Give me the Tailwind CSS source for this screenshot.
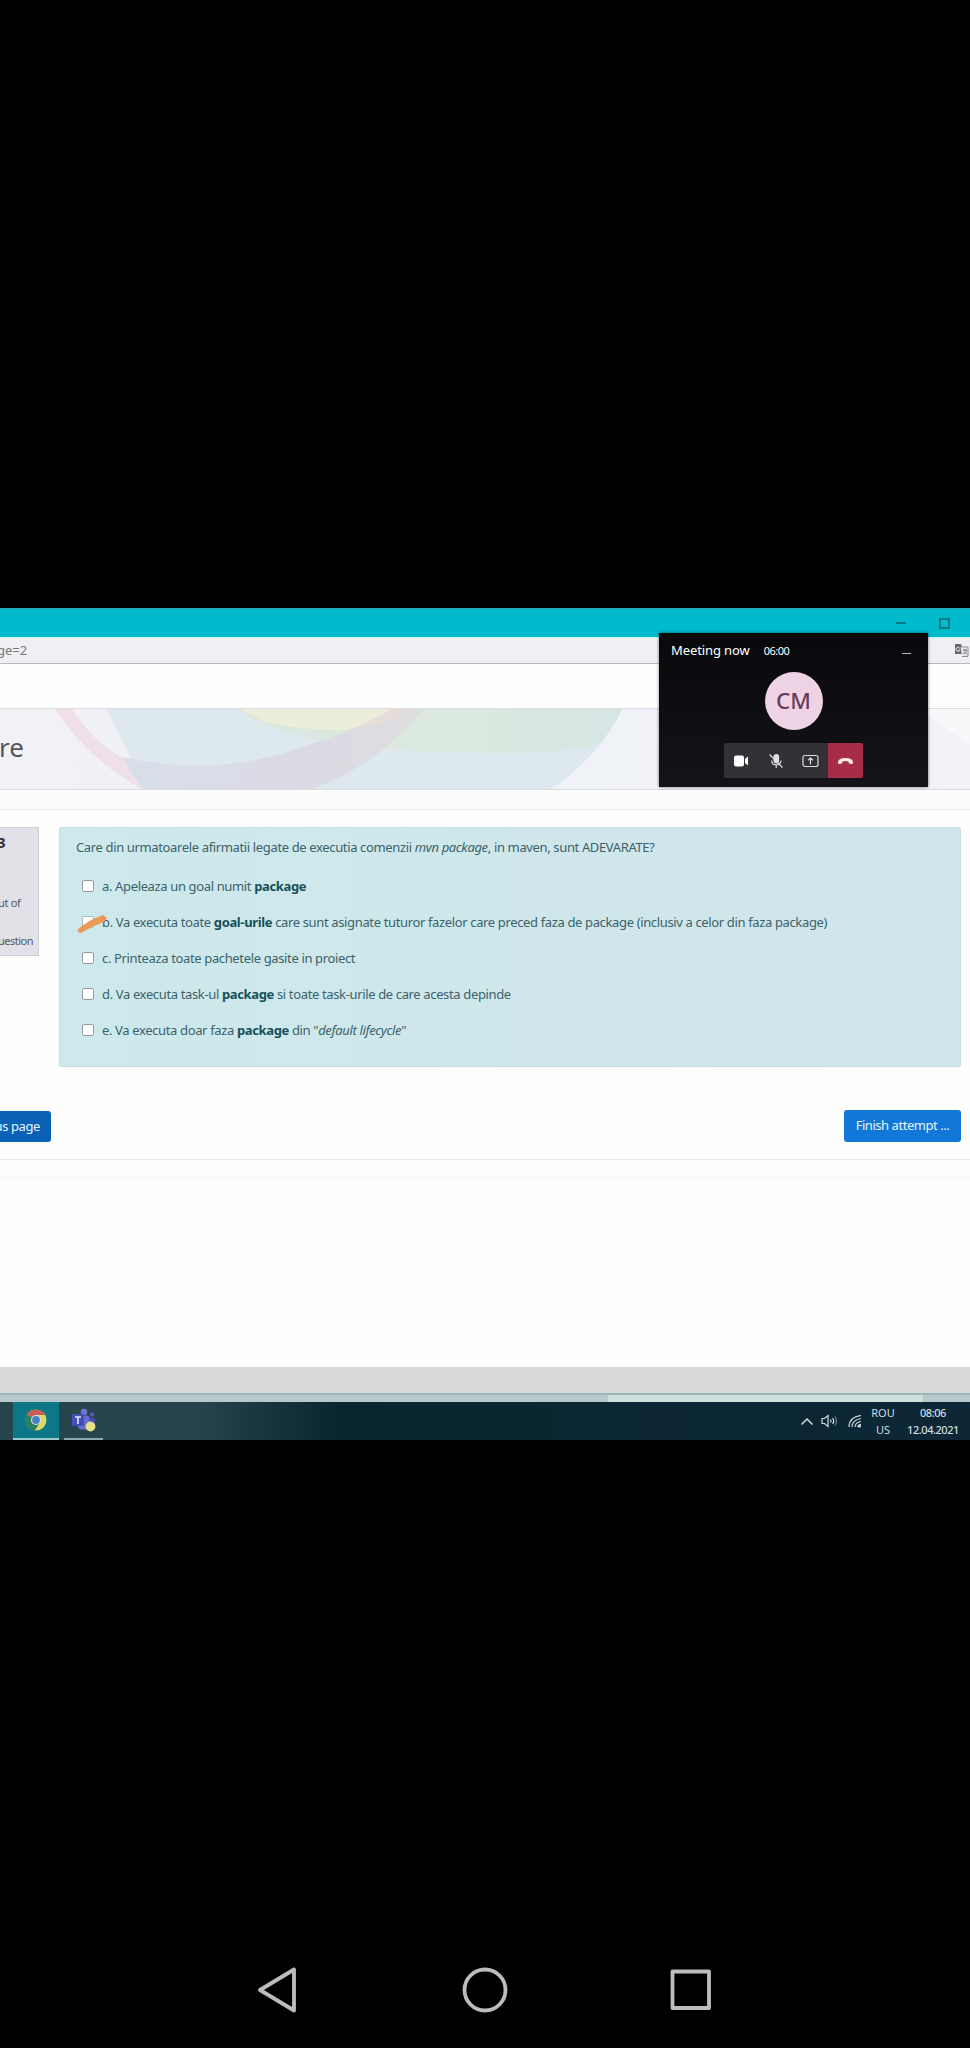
<!DOCTYPE html>
<html lang="ro">
<head>
<meta charset="utf-8">
<title>Quiz</title>
<script src="https://cdn.jsdelivr.net/npm/@tailwindcss/browser@4"></script>
</head>
<body class="bg-black">
<div class="relative flex h-[2048px] w-[970px] flex-col overflow-hidden bg-black font-['Noto_Sans','Open_Sans',sans-serif]">
  <div class="h-[608px] shrink-0"></div>

  <!-- shared desktop -->
  <div class="relative flex h-[832px] shrink-0 flex-col overflow-hidden bg-[#fdfdfd] whitespace-nowrap">
    <div class="flex h-[29px] shrink-0 items-center justify-end gap-[33px] border-t border-[#2fa9b5] bg-[#00bbcd] pr-[20px]">
      <div class="h-[1.5px] w-[10px] bg-[#087985]"></div>
      <div class="h-[11px] w-[11px] border-2 border-[#087985]"></div>
    </div>
    <div class="flex h-[27px] shrink-0 items-center justify-between border-t border-b border-t-[#c5f7fa] border-b-[#b9b9bc] bg-[#f0f0f4]">
      <span class="-ml-[3px] text-[13px] text-[#77777c]">ge=2</span>
      <svg class="mr-px h-[15px] w-[15px]" viewBox="0 0 15 15" fill="none"><path d="M1 1h6l3 10H1z" fill="#66686c"/><path d="M6.500 4H14v9.500H8" fill="#e8e8ea" stroke="#8a8b90"/><path d="M9 7h4M11 6v1M12.500 7c-.5 2-2 3-3.500 4M10 8.500l3 3" stroke="#77797e"/><path d="M5.800 5.200A2 2 0 1 0 6 7H4.500" stroke="#eee"/></svg>
    </div>
    <div class="h-[44px] shrink-0 bg-[#fefefe]"></div>

    <!-- course banner -->
    <div class="relative flex h-[82px] shrink-0 items-center overflow-hidden border-t border-b border-[#dcdde0] bg-[#efeff5]">
      <svg class="absolute inset-0 h-[82px] w-[970px]" viewBox="0 0 970 82" preserveAspectRatio="none">
        <defs>
          <linearGradient id="b" x1="0" x2="1"><stop offset="0" stop-color="#f1f1f6"/><stop offset=".5" stop-color="#eff2f7"/><stop offset="1" stop-color="#f2f2f7"/></linearGradient>
          <linearGradient id="m" x1="0" x2="1"><stop offset="0" stop-color="#d8dfe9"/><stop offset=".55" stop-color="#dbdae5"/><stop offset="1" stop-color="#dedddf"/></linearGradient>
          <linearGradient id="g" x1="0" x2="1"><stop offset="0" stop-color="#dae8df"/><stop offset=".6" stop-color="#dbe8df"/><stop offset="1" stop-color="#d6e6e5"/></linearGradient>
        </defs>
        <path d="M0 0H970V82H0z" fill="url(#b)"/>
        <path d="M106 0H622Q600 48 548 82H145Q128 40 106 0z" fill="#dee8ef"/>
        <path d="M236 0H622Q612 22 598 36Q550 46 482 44Q360 42 300 27Q262 17 236 0z" fill="url(#g)"/>
        <path d="M240 0H410Q385 12 347 21Q300 22 263 12z" fill="#ecedda"/>
        <path d="M55 0H72Q92 32 122 49L146 82Q92 55 55 0z" fill="#eedfe8"/>
        <path d="M122 48Q210 68 290 42Q360 20 392 0H424Q372 62 305 82H146Q132 68 122 48z" fill="url(#m)"/>
        <path d="M350 22Q378 10 392 0H412Q390 15 350 22z" fill="#e6dcd8"/>
        <path d="M918 0H970V36Z" fill="#f8f8fa"/>
      </svg>
      <span class="relative -ml-[1px] -mt-[5px] text-[26px] leading-8 text-[#505860]">re</span>
    </div>

    <div class="h-[20px] shrink-0 border-b border-[#ebebec] bg-[#fcfcfc]"></div>

    <!-- question -->
    <div class="flex h-[258px] shrink-0 items-start gap-[20px] bg-[#fefefe] pt-[17px]">
      <div class="relative h-[129px] w-[39px] shrink-0 overflow-hidden border border-l-0 border-[#cfcfd3] bg-[#e1e1e7] text-[11px] leading-[14px] text-[#55565f]">
        <div class="-ml-[3px] mt-[5px] text-[15px] leading-[18px] font-bold text-[#2e3036]">3</div>
        <div class="-ml-[2px] mt-[45px] tracking-[-0.3px]">ut of</div>
        <div class="-ml-[2px] mt-[24px] tracking-[-0.5px]">uestion</div>
      </div>
      <div class="h-[240px] w-[902px] shrink-0 rounded-[2px] border border-[#c5dfe2] bg-linear-to-r from-[#cde9eb] to-[#d0e5eb] pl-[16px] text-[13px] leading-[20px] tracking-[-0.36px] text-[#3c626b]">
        <p class="mt-[9px]">Care din urmatoarele afirmatii legate de executia comenzii <em>mvn package</em>, in maven, sunt ADEVARATE?</p>
        <div class="mt-[11px] flex flex-col pl-[6px]">
          <label class="flex h-[36px] items-center gap-[8px]"><span class="h-[12px] w-[12px] rounded-[2px] border border-[#8f9fa5] bg-white"></span><span>a. Apeleaza un goal numit <b class="text-[#17505a]">package</b></span></label>
          <label class="relative flex h-[36px] items-center gap-[8px]"><span class="h-[12px] w-[12px] rounded-[2px] border border-[#a9bcc2] bg-white"></span><span>b. Va executa toate <b class="text-[#17505a]">goal-urile</b> care sunt asignate tuturor fazelor care preced faza de package (inclusiv a celor din faza package)</span>
            <svg class="absolute -left-[6px] top-[10px] h-[20px] w-[32px]" viewBox="0 0 32 20"><path d="M1 16L4 19.500Q16 12 28 8L31 4L27 1Q12 6 1 16z" fill="#e99a58"/></svg>
          </label>
          <label class="flex h-[36px] items-center gap-[8px]"><span class="h-[12px] w-[12px] rounded-[2px] border border-[#8f9fa5] bg-white"></span><span>c. Printeaza toate pachetele gasite in proiect</span></label>
          <label class="flex h-[36px] items-center gap-[8px]"><span class="h-[12px] w-[12px] rounded-[2px] border border-[#8f9fa5] bg-white"></span><span>d. Va executa task-ul <b class="text-[#17505a]">package</b> si toate task-urile de care acesta depinde</span></label>
          <label class="flex h-[36px] items-center gap-[8px]"><span class="h-[12px] w-[12px] rounded-[2px] border border-[#8f9fa5] bg-white"></span><span>e. Va executa doar faza <b class="text-[#17505a]">package</b> din "<em>default lifecycle</em>"</span></label>
        </div>
      </div>
    </div>

    <!-- page navigation -->
    <div class="flex h-[92px] shrink-0 items-end justify-between border-b border-[#e8e8ea] pr-[9px] pb-[17px] text-[13px] text-[#e5f5fd]">
      <div class="flex h-[31px] w-[51px] items-center justify-end rounded-r-[3px] bg-[#0b61b5] pr-[11px] tracking-[-0.4px]">us page</div>
      <div class="flex h-[32px] w-[117px] items-center justify-center rounded-[3px] bg-[#1177d9] tracking-[-0.45px]">Finish attempt ...</div>
    </div>
    <div class="h-[18px] shrink-0 border-b border-[#f5f5f6]"></div>
    <div class="h-[189px] shrink-0"></div>
    <div class="h-[26px] shrink-0 bg-[#dadadd]"></div>
    <div class="flex h-[9px] shrink-0 border-t-2 border-[#9ab6b9] bg-[#b7c9cc]">
      <div class="w-[608px]"></div>
      <div class="w-[315px] bg-[#d0e0df]"></div>
    </div>

    <!-- taskbar -->
    <div class="flex h-[38px] shrink-0 items-center justify-between bg-linear-to-r from-[#27454d] from-20% via-[#09262f] via-35% to-[#0d2736] text-[#cddde0]">
      <div class="flex h-full pl-[13px]">
        <div class="flex h-full w-[46px] items-center justify-center border-b-2 border-[#9cc9ca] bg-[#0b7787]">
          <svg class="h-[22px] w-[22px]" viewBox="0 0 22 22"><circle cx="11" cy="11" r="10.500" fill="#dfd867"/><path d="M11 11L2 5.500A10.500 10.500 0 0 1 20.200 6H11z" fill="#cc5b57"/><path d="M11 11L2 5.500A10.500 10.500 0 0 0 10 21.500L14.500 14z" fill="#28825f"/><circle cx="11" cy="11" r="5" fill="#d9e2e4"/><circle cx="11" cy="11" r="3.900" fill="#477fc0"/></svg>
        </div>
        <div class="ml-[5px] flex h-full w-[39px] items-center justify-center border-b-2 border-[#8ba8ad]">
          <svg class="h-[24px] w-[24px]" viewBox="0 0 24 24"><circle cx="12" cy="4" r="3.300" fill="#6b72d4"/><circle cx="20" cy="6.500" r="2.300" fill="#5359b5"/><rect x="6" y="7.500" width="12" height="14" rx="4" fill="#6670d4"/><path d="M17 10h6v6q0 4-5 4z" fill="#454da8"/><rect y="6" width="12" height="12" rx="1" fill="#464eb8"/><path d="M3 9h6M6 9v7" stroke="#e3e6fa" stroke-width="1.600"/><circle cx="18.500" cy="18.500" r="4.900" fill="#e7df86"/></svg>
        </div>
      </div>
      <div class="flex items-center pr-[10px] text-[11px] leading-[17px]">
        <svg class="mr-[7px] h-[10px] w-[14px]" viewBox="0 0 14 10" fill="none" stroke="currentColor" stroke-width="1.500"><path d="M1.500 8.500L7 3l5.500 5.500"/></svg>
        <svg class="mr-[10px] h-[14px] w-[17px]" viewBox="0 0 17 14" fill="none" stroke="currentColor" stroke-width="1.200"><path d="M1 4.500h2.500L7 1.500v11L3.500 9.500H1zM9.500 5.500q1 1.500 0 3M11.700 4q2 3 0 6"/><path d="M14 2.500q3 4.500 0 9" opacity=".5"/></svg>
        <svg class="mr-[9px] h-[14px] w-[14px]" viewBox="0 0 14 14" fill="none" stroke="currentColor" stroke-width="1.100"><path d="M1 13Q1 3 13 1.500M4 13Q4 6 13 4.500M7 13Q7 8.500 13 7.500"/><path d="M9.500 13Q10 10.500 13 10.500" /><circle cx="11.500" cy="12" r="1" fill="currentColor"/></svg>
        <div class="mr-[11px] flex w-[24px] flex-col items-center"><span>ROU</span><span>US</span></div>
        <div class="flex w-[54px] flex-col items-center font-medium tracking-[-0.45px]"><span>08:06</span><span>12.04.2021</span></div>
      </div>
    </div>

    <!-- floating call window -->
    <div class="absolute top-[25px] left-[659px] flex h-[154px] w-[269px] flex-col items-center bg-linear-to-b from-[#09090c] to-[#141318] shadow-[0_0_3px_#0008]">
      <div class="flex h-[36px] w-full items-center pr-[17px] pl-[12px] text-white">
        <span class="text-[13px] tracking-[-0.1px]">Meeting now</span>
        <span class="ml-[14px] text-[11px] tracking-[-0.5px]">06:00</span>
        <span class="mt-[5px] ml-auto h-[1.5px] w-[9px] bg-[#bbb]"></span>
      </div>
      <div class="mt-[3px] flex h-[58px] w-[58px] items-center justify-center rounded-full bg-[#eed3e4] text-[22.5px] font-medium text-[#6a3b5c]">CM</div>
      <div class="mt-[13px] mr-px flex h-[35px] w-[139px] overflow-hidden rounded-[2px] bg-[#313136] text-white">
        <div class="flex flex-1 items-center justify-center"><svg class="h-[14px] w-[16px]" viewBox="0 0 16 14" fill="currentColor"><rect x="1" y="1.500" width="10" height="11" rx="2"/><path d="M12 5l3-2.500v9L12 9z"/></svg></div>
        <div class="flex flex-1 items-center justify-center"><svg class="h-[16px] w-[16px]" viewBox="0 0 16 16" fill="none" stroke="#dedee0" stroke-width="1.200"><rect x="6" y="1.500" width="4.500" height="8.500" rx="2.200" fill="#dedee0"/><path d="M3.500 7.500Q4 12 8.200 12T13 7.500M8.200 12v3M1.500 1.500l13 13"/></svg></div>
        <div class="flex flex-1 items-center justify-center"><svg class="h-[14px] w-[17px]" viewBox="0 0 17 14" fill="none" stroke="#dedee0" stroke-width="1.200"><rect x="1" y="1.500" width="15" height="11" rx="2"/><path d="M8.500 10.500v-6.500M6 6.300L8.500 4 11 6.300"/></svg></div>
        <div class="flex flex-1 items-center justify-center bg-[#a62c47]"><svg class="h-[8px] w-[17px]" viewBox="0 0 17 8" fill="#fbe9ec"><path d="M1 5.500Q1 1 8.500 1T16 5.500Q16 7.300 14.500 7L12.300 6.500Q11.500 6 11.500 4.400Q8.500 3.600 5.500 4.400Q5.500 6 4.700 6.500L2.500 7Q1 7.300 1 5.500z"/></svg></div>
      </div>
    </div>
  </div>

  <!-- phone navigation -->
  <div class="mt-auto flex h-[116px] items-center justify-between px-[257px] text-[#bdbdbd]">
    <svg class="h-[48px] w-[40px]" viewBox="0 0 40 48" fill="none" stroke="currentColor" stroke-width="3.800" stroke-linejoin="round"><path d="M3 24L37 3.500V44.500z"/></svg>
    <svg class="ml-[4px] h-[48px] w-[48px]" viewBox="0 0 48 48" fill="none" stroke="currentColor" stroke-width="3.800"><circle cx="24" cy="24" r="20.500"/></svg>
    <svg class="h-[44px] w-[44px]" viewBox="0 0 44 44" fill="none" stroke="currentColor" stroke-width="3.800" stroke-linejoin="round"><path d="M3.500 3.500h36.500v36.500H3.500z"/></svg>
  </div>
</div>
</body>
</html>
